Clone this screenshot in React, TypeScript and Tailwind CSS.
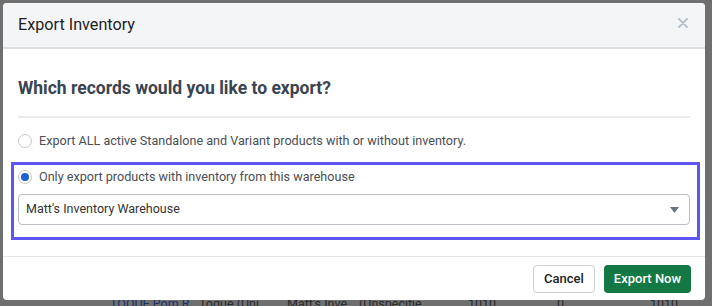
export default function App() {
  return (
    <div
      className="relative h-[306px] w-[712px] overflow-hidden bg-[#6f6f6f] pl-[3px] pt-[3px]"
      style={{ fontFamily: 'Roboto, "Liberation Sans", sans-serif' }}
    >
      {/* page behind the overlay */}
      <div className="absolute left-0 top-[294px] h-[20px] w-full text-[12.5px] leading-[20px] text-[#2a2a2a]">
        <span className="absolute left-[110px] text-[#1c2f6a]">TOQUE Pom R</span>
        <span className="absolute left-[199px]">Toque (Uni...</span>
        <span className="absolute left-[287px]">Matt's Inve...</span>
        <span className="absolute left-[359px]">(Unspecifie...</span>
        <span className="absolute left-[468px]">1010</span>
        <span className="absolute left-[557px]">0</span>
        <span className="absolute left-[650px]">1010</span>
      </div>

      {/* Modal */}
      <div className="relative z-10 flex h-[297px] w-[702px] flex-col overflow-hidden rounded-[4px] bg-white">
        <div className="flex h-[46px] shrink-0 items-center justify-between border-b-2 border-[#dcdfe2] bg-[#f4f5f6] pl-[15px] pr-[17px]">
          <h2 className="pt-[1px] text-[16.2px] text-[#1e1e1e]">Export Inventory</h2>
          <svg width="10" height="10" viewBox="0 0 10 10" className="mb-[5px]">
            <path d="M1 1L9 9M9 1L1 9" stroke="#b9c3cc" strokeWidth="2" strokeLinecap="round" />
          </svg>
        </div>

        <div className="flex flex-col px-[15px]">
          <h3 className="mt-[27px] text-[17.5px] font-bold leading-[24px] text-[#3a4350]">
            Which records would you like to export?
          </h3>
          <div className="mt-[16px] h-[2px] bg-[#ebebeb]" />

          <label className="mt-[13px] flex h-[20px] items-center gap-[7px] text-[12.6px] text-[#4a4e55]">
            <span className="h-[14px] w-[14px] shrink-0 rounded-full border border-[#c5cad0] bg-white" />
            Export ALL active Standalone and Variant products with or without inventory.
          </label>

          <div className="ml-[-7px] mr-[-10px] mt-[11px] border-[3px] border-[#5f55f2] pb-[12px] pl-[4px] pr-[7px] pt-[2px]">
            <label className="flex h-[20px] items-center gap-[7px] text-[12.6px] text-[#4a4e55]">
              <span className="flex h-[14px] w-[14px] shrink-0 items-center justify-center rounded-full border border-[#c5cad0] bg-white">
                <span className="h-[8px] w-[8px] rounded-full bg-[#1c5fd8]" />
              </span>
              Only export products with inventory from this warehouse
            </label>
            <div className="mt-[7px] flex h-[31px] items-center justify-between rounded-[4px] border border-[#b9bdc4] pl-[7px] pr-[10px] text-[12.5px] text-[#333]">
              <span>Matt's Inventory Warehouse</span>
              <svg width="9" height="6" viewBox="0 0 9 6">
                <path d="M0 0H9L4.5 6Z" fill="#6b7280" />
              </svg>
            </div>
          </div>
        </div>

        <div className="mt-auto flex h-[44px] items-center justify-end gap-[9px] border-t border-[#e6e6e6] pr-[14px]">
          <button className="h-[28px] w-[62px] rounded-[4px] border border-[#cfcfcf] bg-white text-[13px] font-medium text-[#222]">
            Cancel
          </button>
          <button className="h-[28px] w-[87px] rounded-[4px] bg-[#137844] text-[13px] font-medium text-white">
            Export Now
          </button>
        </div>
      </div>
    </div>
  );
}
